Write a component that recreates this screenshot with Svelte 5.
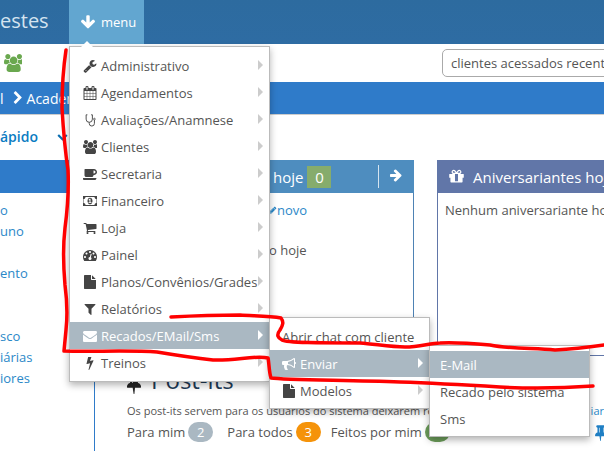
<script>
  const icons = {
    wrench: 'M448 1472q0-26-19-45t-45-19-45 19-19 45 19 45 45 19 45-19 19-45zm644-420l-682 682q-37 37-90 37-52 0-91-37l-106-108q-38-36-38-90 0-53 38-91l681-681q39 98 114.5 173.5t173.5 114.5zm634-435q0 39-23 106-47 134-164.5 217.5t-258.5 83.5q-185 0-316.5-131.5t-131.5-316.5 131.5-316.5 316.5-131.5q58 0 121.5 16.5t107.5 46.5q16 11 16 28t-16 28l-293 169v224l193 107q5-3 79-48.5t135.5-81 70.5-35.5q15 0 23.5 10t8.5 25z',
    calendar: 'M192 1664h288v-288h-288v288zm352 0h320v-288h-320v288zm-352-352h288v-320h-288v320zm352 0h320v-320h-320v320zm-352-384h288v-288h-288v288zm736 736h320v-288h-320v288zm-384-736h320v-288h-320v288zm768 736h288v-288h-288v288zm-384-352h320v-320h-320v320zm-352-864v-288q0-13-9.5-22.5t-22.5-9.5h-64q-13 0-22.5 9.5t-9.5 22.5v288q0 13 9.5 22.5t22.5 9.5h64q13 0 22.5-9.5t9.5-22.5zm736 864h288v-320h-288v320zm-384-384h320v-288h-320v288zm384 0h288v-288h-288v288zm32-480v-288q0-13-9.5-22.5t-22.5-9.5h-64q-13 0-22.5 9.5t-9.5 22.5v288q0 13 9.5 22.5t22.5 9.5h64q13 0 22.5-9.5t9.5-22.5zm384-64v1280q0 52-38 90t-90 38h-1408q-52 0-90-38t-38-90v-1280q0-52 38-90t90-38h128v-96q0-66 47-113t113-47h64q66 0 113 47t47 113v96h384v-96q0-66 47-113t113-47h64q66 0 113 47t47 113v96h128q52 0 90 38t38 90z',
    users: 'M593 896q-162 5-265 128h-134q-82 0-138-40.5t-56-118.5q0-353 124-353 6 0 43.5 21t97.5 42.5 119 21.5q67 0 133-23-5 37-5 66 0 139 81 256zm1071 637q0 120-73 189.5t-194 69.5h-874q-121 0-194-69.5t-73-189.5q0-53 3.5-103.5t14-109 26.5-108.5 43-97.5 62-81 85.5-53.5 111.5-20q10 0 43 21.5t73 48 107 48 135 21.5 135-21.5 107-48 73-48 43-21.5q61 0 111.5 20t85.5 53.5 62 81 43 97.5 26.5 108.5 14 109 3.5 103.5zm-1024-1277q0 106-75 181t-181 75-181-75-75-181 75-181 181-75 181 75 75 181zm704 384q0 159-112.5 271.5t-271.5 112.5-271.5-112.5-112.5-271.5 112.5-271.5 271.5-112.5 271.5 112.5 112.5 271.5zm576 225q0 78-56 118.5t-138 40.5h-134q-103-123-265-128 81-117 81-256 0-29-5-66 66 23 133 23 59 0 119-21.5t97.5-42.5 43.5-21q124 0 124 353zm-128-609q0 106-75 181t-181 75-181-75-75-181 75-181 181-75 181 75 75 181z',
    coffee: 'M1600 640q0-80-56-136t-136-56h-64v384h64q80 0 136-56t56-136zm-1664 768h1792q0 106-75 181t-181 75h-1280q-106 0-181-75t-75-181zm1856-768q0 159-112.5 271.5t-271.5 112.5h-64v32q0 92-66 158t-158 66h-704q-92 0-158-66t-66-158v-736q0-26 19-45t45-19h1152q159 0 271.5 112.5t112.5 271.5z',
    money: 'M704 1152h384v-96h-128v-448h-114l-148 137 77 80q42-37 55-57h2v288h-128v96zm512-256q0 70-21 142t-59.5 134-101.5 101-138 39-138-39-101.5-101-59.5-134-21-142 21-142 59.5-134 101.5-101 138-39 138 39 101.5 101 59.5 134 21 142zm512 256v-512q-106 0-181-75t-75-181h-1152q0 106-75 181t-181 75v512q106 0 181 75t75 181h1152q0-106 75-181t181-75zm128-832v1152q0 26-19 45t-45 19h-1792q-26 0-45-19t-19-45v-1152q0-26 19-45t45-19h1792q26 0 45 19t19 45z',
    cart: 'M704 1536q0 52-38 90t-90 38-90-38-38-90 38-90 90-38 90 38 38 90zm896 0q0 52-38 90t-90 38-90-38-38-90 38-90 90-38 90 38 38 90zm128-1088v512q0 24-16.5 42.5t-40.5 21.5l-1044 122q13 60 13 70 0 16-24 64h920q26 0 45 19t19 45-19 45-45 19h-1024q-26 0-45-19t-19-45q0-11 8-31.5t16-36 21.5-40 15.5-29.5l-177-823h-204q-26 0-45-19t-19-45 19-45 45-19h256q16 0 28.5 6.5t19.5 15.5 13 24.5 8 26 5.5 29.5 4.5 26h1201q26 0 45 19t19 45z',
    dashboard: 'M384 1152q0-53-37.5-90.5t-90.5-37.5-90.5 37.5-37.5 90.5 37.5 90.5 90.5 37.5 90.5-37.5 37.5-90.5zm192-448q0-53-37.5-90.5t-90.5-37.5-90.5 37.5-37.5 90.5 37.5 90.5 90.5 37.5 90.5-37.5 37.5-90.5zm428 481l101-382q6-26-7.5-48.5t-38.5-29.5-48 6.5-30 39.5l-101 382q-60 5-107 43.5t-63 98.5q-20 77 20 146t117 89 146-20 89-117q16-60-6-117t-72-91zm660-33q0-53-37.5-90.5t-90.5-37.5-90.5 37.5-37.5 90.5 37.5 90.5 90.5 37.5 90.5-37.5 37.5-90.5zm-640-640q0-53-37.5-90.5t-90.5-37.5-90.5 37.5-37.5 90.5 37.5 90.5 90.5 37.5 90.5-37.5 37.5-90.5zm448 192q0-53-37.5-90.5t-90.5-37.5-90.5 37.5-37.5 90.5 37.5 90.5 90.5 37.5 90.5-37.5 37.5-90.5zm320 448q0 261-141 483-19 29-54 29h-1402q-35 0-54-29-141-221-141-483 0-182 71-348t191-286 286-191 348-71 348 71 286 191 191 286 71 348z',
    file: 'M1152 512v-472q22 14 36 28l408 408q14 14 28 36h-472zm-128 32q0 40 28 68t68 28h544v1056q0 40-28 68t-68 28h-1344q-40 0-68-28t-28-68v-1600q0-40 28-68t68-28h800v544z',
    filter: 'M1595 295q17 41-14 70l-493 493v742q0 42-39 59-13 5-25 5-27 0-45-19l-256-256q-19-19-19-45v-486l-493-493q-31-29-14-70 17-39 59-39h1280q42 0 59 39z',
    envelope: 'M1792 710v794q0 66-47 113t-113 47h-1472q-66 0-113-47t-47-113v-794q44 49 101 87 362 246 497 345 57 42 92.5 65.5t94.5 48 110 24.5h2q51 0 110-24.5t94.5-48 92.5-65.5q170-123 498-345 57-39 100-87zm0-294q0 79-49 151t-122 123q-376 261-468 325-10 7-42.5 30.5t-54 38-52 32.5-57.5 27-50 9h-2q-23 0-50-9t-57.5-27-52-32.5-54-38-42.5-30.5q-91-64-262-182.5t-205-142.5q-62-42-117-115.5t-55-136.5q0-78 41.5-130t118.5-52h1472q65 0 112.5 47t47.5 113z',
    bolt: 'M1333 566q18 20 7 44l-540 1157q-13 25-42 25-4 0-14-2-17-5-25.5-19t-4.5-30l197-808-406 101q-4 1-12 1-18 0-31-11-18-15-13-39l201-825q4-14 16-23t28-9h328q19 0 32 12.5t13 29.5q0 8-5 18l-171 463 396-98q8-2 12-2 19 0 34 15z',
    bullhorn: 'M1664 640q53 0 90.5 37.5t37.5 90.5-37.5 90.5-90.5 37.5v384q0 52-38 90t-90 38q-417-347-812-380-58 19-91 66t-31 100.5 40 92.5q-20 33-23 65.5t6 58 33.5 55 48 50 61.5 50.5q-29 58-111.5 83t-168.5 11.5-132-55.5q-7-23-29.5-87.5t-32-94.5-23-89-15-101 3.5-98.5 22-110.5h-122q-66 0-113-47t-47-113v-192q0-66 47-113t113-47h480q435 0 896-384 52 0 90 38t38 90v384zm-128 604v-954q-394 302-768 343v270q377 42 768 341z',
    arrowDown: 'M1675 832q0 53-37 90l-651 652q-39 37-91 37-53 0-90-37l-651-652q-38-36-38-90 0-53 38-91l74-75q39-37 91-37 53 0 90 37l294 294v-704q0-52 38-90t90-38h128q52 0 90 38t38 90v704l294-294q37-37 90-37 52 0 91 37l75 75q37 39 37 91z',
    arrowRight: 'M1600 960q0 54-37 91l-651 651q-39 37-91 37-53 0-90-37l-75-75q-38-38-38-91t38-91l293-293h-704q-52 0-85.5-37.5t-33.5-90.5v-128q0-53 33.5-90.5t85.5-37.5h704l-293-294q-38-36-38-90t38-90l75-75q38-38 90-38 54 0 91 38l651 651q37 35 37 90z',
    chevronRight: 'M1363 877l-742 742q-19 19-45 19t-45-19l-166-166q-19-19-19-45t19-45l531-531-531-531q-19-19-19-45t19-45l166-166q19-19 45-19t45 19l742 742q19 19 19 45t-19 45z',
    chevronDown: 'M1683 808l-742 741q-19 19-45 19t-45-19l-742-741q-19-19-19-45.5t19-45.5l166-165q19-19 45-19t45 19l531 531 531-531q19-19 45-19t45 19l166 165q19 19 19 45.5t-19 45.5z',
    gift: 'M1056 1356v-716h-320v716q0 25 18 38.5t46 13.5h192q28 0 46-13.5t18-38.5zm-456-844h195l-126-161q-26-31-69-31-40 0-68 28t-28 68 28 68 68 28zm688-96q0-40-28-68t-68-28q-43 0-69 31l-125 161h194q40 0 68-28t28-68zm376 256v320q0 14-9 23t-23 9h-96v416q0 40-28 68t-68 28h-1088q-40 0-68-28t-28-68v-416h-96q-14 0-23-9t-9-23v-320q0-14 9-23t23-9h440q-93 0-158.5-65.5t-65.5-158.5 65.5-158.5 158.5-65.5q107 0 168 77l128 165 128-165q61-77 168-77 93 0 158.5 65.5t65.5 158.5-65.5 158.5-158.5 65.5h440q14 0 23 9t9 23z',
    pencil: 'M491 1536l91-91-235-235-91 91v107h128v128h107zm523-928q0-22-22-22-10 0-17 7l-542 542q-7 7-7 17 0 22 22 22 10 0 17-7l542-542q7-7 7-17zm-54-192l416 416-832 832h-416v-416zm683 96q0 53-37 90l-166 166-416-416 166-165q36-38 90-38 53 0 91 38l235 234q37 39 37 91z',
    pin: 'M800 864v-448q0-14-9-23t-23-9-23 9-9 23v448q0 14 9 23t23 9 23-9 9-23zm672 352q0 26-19 45t-45 19h-429l-51 483q-2 12-10.5 20.5t-20.5 8.5h-1q-27 0-32-27l-76-485h-404q-26 0-45-19t-19-45q0-123 78.5-221.5t177.5-98.5v-512q-52 0-90-38t-38-90 38-90 90-38h640q52 0 90 38t38 90-38 90-90 38v512q99 0 177.5 98.5t78.5 221.5z'
  };

  const menu = [
    { label: 'Administrativo', icon: 'wrench' },
    { label: 'Agendamentos', icon: 'calendar' },
    { label: 'Avaliações/Anamnese', icon: 'stetho' },
    { label: 'Clientes', icon: 'users' },
    { label: 'Secretaria', icon: 'coffee' },
    { label: 'Financeiro', icon: 'money' },
    { label: 'Loja', icon: 'cart' },
    { label: 'Painel', icon: 'dashboard' },
    { label: 'Planos/Convênios/Grades', icon: 'file' },
    { label: 'Relatórios', icon: 'filter' },
    { label: 'Recados/EMail/Sms', icon: 'envelope', open: true },
    { label: 'Treinos', icon: 'bolt' }
  ];

  const sideGroups = [
    { top: 0, links: ['o', 'uno'] },
    { top: 21, links: ['ento'] },
    { top: 42, links: ['sco', 'iárias', 'iores'] }
  ];
</script>

{#snippet icon(name)}
  <svg class="ico" viewBox="0 0 1792 1792" aria-hidden="true">
    {#if name === 'stetho'}
      <path d="M560 230H400v560a400 400 0 0 0 800 0V230h-160M800 1190v150a330 330 0 0 0 660 0V900" fill="none" stroke="currentColor" stroke-width="120" />
      <circle cx="1460" cy="780" r="110" fill="none" stroke="currentColor" stroke-width="100" />
    {:else}
      <path d={icons[name]} fill="currentColor" />
    {/if}
  </svg>
{/snippet}

<div class="page">
  <header class="topbar">
    <div class="brand">estes</div>
    <button class="menu-btn">{@render icon('arrowDown')}<span>menu</span></button>
  </header>

  <div class="toolbar">
    <span class="group">{@render icon('users')}</span>
    <div class="recent">clientes acessados recentemente</div>
  </div>

  <nav class="crumbs">
    <span>l</span>
    <span class="sep">{@render icon('chevronRight')}</span>
    <span>Academia de Ginástica e Musculação</span>
  </nav>

  <div class="quick">
    <span>ápido</span>
    <span class="quick-chev">{@render icon('chevronDown')}</span>
  </div>

  <div class="content">
    <aside class="side">
      <div class="side-head"></div>
      <div class="side-links">
        {#each sideGroups as g}
          <ul style="margin-top: {g.top}px">
            {#each g.links as l}<li>{l}</li>{/each}
          </ul>
        {/each}
      </div>
    </aside>

    <main class="main">
      <div class="panels">
        <section class="panel today">
          <div class="panel-head">
            <span>hoje</span>
            <b class="count">0</b>
            <i class="divider"></i>
            <span class="go">{@render icon('arrowRight')}</span>
          </div>
          <div class="panel-body">
            <div class="new">{@render icon('pencil')}<span>novo</span></div>
            <div class="none">o hoje</div>
          </div>
        </section>
        <section class="panel birthdays">
          <div class="panel-head">
            <span class="gift">{@render icon('gift')}</span>
            <span>Aniversariantes hoje</span>
          </div>
          <div class="panel-body">Nenhum aniversariante hoje</div>
        </section>
      </div>

      <section class="postits">
        <h2>{@render icon('pin')}<span>Post-its</span></h2>
        <div class="desc">
          <span>Os post-its servem para os usuários do sistema deixarem recados</span>
          <a href="#criar">iar</a>
        </div>
        <div class="filters">
          <span>Para mim</span><b class="pill grey">2</b>
          <span class="f2">Para todos</span><b class="pill orange">3</b>
          <span class="f3">Feitos por mim</span><b class="pill green">1</b>
          <span class="pin-blue">{@render icon('pin')}</span>
        </div>
      </section>
    </main>
  </div>

  <ul class="dropdown">
    {#each menu as item}
      <li class:active={item.open}>
        <span class="slot">{@render icon(item.icon)}</span>
        <span class="lbl">{item.label}</span>
        <i class="caret"></i>
        {#if item.open}
          <ul class="dropdown sub">
            <li class="plain"><span class="lbl">Abrir chat com cliente</span></li>
            <li class="active">
              <span class="slot">{@render icon('bullhorn')}</span>
              <span class="lbl">Enviar</span>
              <i class="caret"></i>
              <ul class="dropdown subsub">
                <li class="active plain"><span class="lbl">E-Mail</span></li>
                <li class="plain"><span class="lbl">Recado pelo sistema</span></li>
                <li class="plain"><span class="lbl">Sms</span></li>
              </ul>
            </li>
            <li>
              <span class="slot">{@render icon('file')}</span>
              <span class="lbl">Modelos</span>
              <i class="caret"></i>
            </li>
          </ul>
        {/if}
      </li>
    {/each}
  </ul>

  <!-- marker scribble drawn over the screenshot -->
  <svg class="scribble" viewBox="0 0 604 451">
    <path d="M66 50C63 70 62 90 62 108 63 125 65 150 68 170 69 190 68 205 65 228 63 245 63 262 65 285 67 300 68 312 66 330L64 351C90 352 130 350 157 352 175 355 195 358 213 360 235 361 255 355 268 358 269 362 269 372 271 378 285 380 340 380 400 382 430 383 467 385 500 387 533 389 565 388 593 386" />
    <path d="M171 317C190 316 215 315 240 315 255 316 270 316 281 318 284 322 283 325 280 330 276 335 278 338 282 340 287 343 320 343 360 343 375 344 390 347 405 347 420 347 430 343 440 343 455 342 467 343 490 345 510 349 533 348 555 350 575 349 590 347 604 345" />
  </svg>
</div>

<style>
  :global(body) {
    margin: 0;
  }

  .page {
    position: relative;
    width: 604px;
    height: 451px;
    overflow: hidden;
    background: #fff;
    font-family: 'Open Sans', sans-serif;
    font-size: 13px;
    color: #555;
  }

  .ico {
    display: block;
    width: 14px;
    height: 14px;
  }

  .topbar {
    display: flex;
    height: 44px;
    background: linear-gradient(#2d6b9f, #2e6ca3);
    color: #fff;
  }

  .brand {
    width: 69px;
    font-size: 20px;
    line-height: 42px;
    color: #d5e4f0;
  }

  .menu-btn {
    display: flex;
    align-items: center;
    gap: 5px;
    width: 75px;
    padding: 0 0 0 11px;
    border: 0;
    background: #62a6d0;
    color: #fff;
    font: 13px 'Open Sans', sans-serif;
  }

  .menu-btn .ico {
    width: 16px;
    height: 16px;
  }

  .toolbar {
    display: flex;
    align-items: center;
    justify-content: space-between;
    height: 38px;
  }

  .group {
    margin-left: 4px;
    color: #6aa84f;
  }

  .group .ico {
    width: 18px;
    height: 18px;
  }

  .recent {
    flex: none;
    box-sizing: border-box;
    width: 220px;
    height: 28px;
    margin-right: -58px;
    padding-left: 8px;
    border: 1px solid #aaa;
    border-radius: 5px;
    font-size: 13px;
    line-height: 26px;
    white-space: nowrap;
    overflow: hidden;
    color: #555;
  }

  .crumbs {
    display: flex;
    align-items: center;
    box-sizing: border-box;
    height: 33px;
    border-bottom: 1px solid #ccc;
    background: #2f7bc9;
    color: #fff;
    font-size: 14px;
    white-space: nowrap;
  }

  .sep {
    margin: 0 2px 0 7px;
  }

  .quick {
    display: flex;
    align-items: center;
    box-sizing: border-box;
    height: 45px;
    padding-bottom: 3px;
    color: #0a7cc2;
    font-size: 14px;
    font-weight: 600;
  }

  .quick-chev {
    margin-left: 19px;
    color: #0a6db0;
  }

  .quick-chev .ico {
    width: 11px;
    height: 11px;
  }

  .content {
    display: flex;
    height: 291px;
  }

  .side {
    flex: none;
    width: 94px;
  }

  .side-head {
    height: 33px;
    background: #2f7bc9;
  }

  .side-links {
    padding-top: 7px;
    color: #2a88c8;
    line-height: 21px;
  }

  .side-links ul {
    margin: 0;
    padding: 0;
    list-style: none;
  }

  .main {
    flex: none;
    width: 510px;
    overflow: hidden;
  }

  .panels {
    display: flex;
    gap: 23px;
    height: 196px;
    margin-bottom: 9px;
  }

  .panel {
    flex: none;
    box-sizing: border-box;
    border-width: 0 1px 1px;
    border-style: solid;
  }

  .today {
    width: 320px;
    border-color: #4e82b4;
  }

  .birthdays {
    width: 300px;
    border-color: #6176a8;
  }

  .panel-head {
    display: flex;
    align-items: center;
    height: 33px;
    margin: 0 -1px;
    color: #fff;
    font-size: 15px;
  }

  .today .panel-head {
    padding-left: 179px;
    background: #4e8dbf;
  }

  .birthdays .panel-head {
    padding-left: 11px;
    background: #6176a8;
  }

  .count {
    box-sizing: border-box;
    width: 24px;
    height: 22px;
    margin-left: 4px;
    background: #86ac6c;
    font-weight: 400;
    line-height: 22px;
    text-align: center;
  }

  .divider {
    width: 1px;
    height: 23px;
    margin-left: 47px;
    background: #d5e4f0;
  }

  .go {
    margin: -3px 0 0 10px;
  }

  .gift {
    margin-right: 8px;
  }

  .gift .ico {
    width: 17px;
    height: 17px;
  }

  .panel-body {
    padding: 8px 7px;
    line-height: 18px;
  }

  .today .panel-body {
    padding-left: 174px;
  }

  .new {
    display: flex;
    align-items: center;
    color: #2a88c8;
  }

  .new .ico {
    width: 8px;
    height: 8px;
  }

  .none {
    margin-top: 22px;
  }

  .postits {
    box-sizing: border-box;
    height: 86px;
    padding-left: 32px;
    border-left: 1px solid #2f7bc9;
  }

  .postits h2 {
    display: flex;
    align-items: center;
    gap: 6px;
    height: 36px;
    margin: 0;
    color: #1f3b57;
    font-size: 24px;
    font-weight: 400;
    line-height: 30px;
  }

  .postits h2 span {
    margin-top: -6px;
  }

  .postits h2 .ico {
    width: 22px;
    height: 22px;
    margin-left: -4px;
    color: #222;
  }

  .desc {
    display: flex;
    justify-content: space-between;
    font-size: 11px;
    line-height: 20px;
    white-space: nowrap;
  }

  .desc a {
    color: #2a88c8;
    text-decoration: none;
  }

  .filters {
    display: flex;
    align-items: center;
    margin-top: 1px;
    font-size: 13px;
    white-space: nowrap;
  }

  .pill {
    box-sizing: border-box;
    width: 25px;
    height: 20px;
    margin-left: 3px;
    border-radius: 10px;
    color: #fff;
    font-weight: 400;
    line-height: 20px;
    text-align: center;
  }

  .grey { background: #aab8c2; }
  .orange { background: #f5930a; }
  .green { background: #6d9e5b; }

  .f2 { margin-left: 14px; }
  .f3 { margin-left: 10px; }

  .pin-blue {
    margin: 0 -5px 0 auto;
    color: #1f7fc4;
  }

  .pin-blue .ico {
    width: 17px;
    height: 17px;
  }

  .dropdown {
    position: absolute;
    top: 46px;
    left: 69px;
    box-sizing: border-box;
    width: 201px;
    margin: 0;
    padding: 5px 0;
    border: 1px solid #bbb;
    background: #fff;
    box-shadow: 0 3px 7px rgba(0, 0, 0, 0.3);
    list-style: none;
    color: #555;
    font-size: 13px;
  }

  .dropdown::before {
    content: '';
    position: absolute;
    top: -6px;
    left: 11px;
    border: 6px solid transparent;
    border-top: 0;
    border-bottom-color: #fff;
  }

  .sub::before,
  .subsub::before {
    display: none;
  }

  .dropdown li {
    position: relative;
    display: flex;
    align-items: center;
    height: 27px;
    padding-left: 13px;
  }

  .slot {
    flex: none;
    width: 14px;
    margin-right: 4px;
    color: #444;
  }

  .lbl {
    white-space: nowrap;
  }

  .caret {
    position: absolute;
    right: 6px;
    top: 8px;
    border-style: solid;
    border-width: 5px 0 5px 5px;
    border-color: transparent transparent transparent #ccc;
  }

  .dropdown li.active {
    background: #aab8c2;
    color: #fff;
  }

  .dropdown li.active > .slot {
    color: #fff;
  }

  .dropdown li.active > .caret {
    border-left-color: #fff;
  }

  .sub {
    top: -5px;
    left: 199px;
    width: 161px;
    padding-bottom: 4px;
    color: #555;
  }

  .sub li {
    padding-left: 12px;
  }

  .subsub {
    top: -5px;
    left: 159px;
    width: 161px;
    padding-bottom: 4px;
  }

  .subsub li {
    padding-left: 10px;
  }

  .scribble {
    position: absolute;
    inset: 0;
    width: 604px;
    height: 451px;
    fill: none;
    stroke: #f00;
    stroke-width: 3.5;
    stroke-linecap: round;
    stroke-linejoin: round;
    pointer-events: none;
  }
</style>
